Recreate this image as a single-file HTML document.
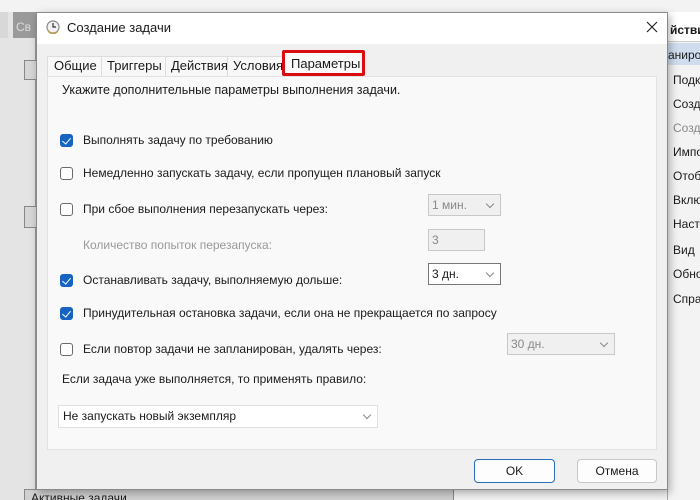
<!DOCTYPE html>
<html><head><meta charset="utf-8"><style>
*{box-sizing:border-box;margin:0;padding:0}
html,body{width:700px;height:500px;overflow:hidden}
body{position:relative;background:#f3f3f3;font-family:"Liberation Sans","DejaVu Sans",sans-serif;font-size:12px;color:#1a1a1a}
#w{position:absolute;left:0;top:0;width:700px;height:500px;overflow:hidden}
.a{position:absolute;white-space:nowrap}
.cb{position:absolute;left:60px;width:13px;height:13px;border:1px solid #6a6a6a;border-radius:3px;background:#fff}
.cb.on{background:#1664c0;border-color:#1664c0}
.cb.on:after{content:"";position:absolute;left:3px;top:1px;width:4px;height:7px;border:solid #fff;border-width:0 1px 1px 0;transform:rotate(40deg)}
.lb{position:absolute;left:83px;white-space:nowrap}
.sel{position:absolute;height:22px;border:1px solid #b8b8b8;background:#fff;padding-left:3px;line-height:20px;white-space:nowrap}
.sel.dis{background:#f0f0f0;color:#888;border-color:#c8c8c8}
.chev{position:absolute;right:7px;top:6px;width:6px;height:6px;border:solid #888;border-width:0 1px 1px 0;transform:rotate(45deg)}
.ri{position:absolute;left:673px;font-size:12px;width:27px;overflow:hidden;white-space:nowrap}
</style></head><body><div id="w">
<!-- left background -->
<div class="a" style="left:0;top:12px;width:36px;height:488px;background:#e4e4e4;border-right:1px solid #999"></div>
<div class="a" style="left:0;top:12px;width:8px;height:26px;background:#d8d8d8"></div>
<div class="a" style="left:13px;top:12px;width:23px;height:26px;background:#9a9a9a;color:#ddd;padding:8px 0 0 3px;overflow:hidden">Св</div>
<div class="a" style="left:24px;top:60px;width:14px;height:20px;background:#d6d6d6;border:1px solid #888"></div>
<div class="a" style="left:24px;top:206px;width:14px;height:22px;background:#d6d6d6;border:1px solid #888"></div>
<div class="a" style="left:24px;top:489px;width:430px;height:11px;background:#d0d0d0;border:1px solid #888;border-bottom:none;padding-left:6px;font-size:12px;line-height:16px;overflow:hidden">Активные задачи</div>
<!-- right background -->
<div class="a" style="left:667px;top:12px;width:33px;height:488px;background:#f3f3f3;border-left:1px solid #aaa"></div>
<div class="a" style="left:668px;top:12px;width:32px;height:30px;background:#fff;border-bottom:1px solid #ccc;font-weight:bold;padding:11px 0 0 2px;font-size:12px;overflow:hidden">йствия</div>
<div class="a" style="left:668px;top:43px;width:32px;height:22px;background:#cfddee;padding:5px 0 0 0;overflow:hidden">анирования</div>
<div class="ri" style="top:73px">Подключиться</div>
<div class="ri" style="top:97px">Создать</div>
<div class="ri" style="top:121px;color:#888">Создать</div>
<div class="ri" style="top:145px">Импорт</div>
<div class="ri" style="top:169px">Отобразить</div>
<div class="ri" style="top:193px">Включить</div>
<div class="ri" style="top:217px">Настройка</div>
<div class="ri" style="top:243px">Вид</div>
<div class="ri" style="top:267px">Обновить</div>
<div class="ri" style="top:292px">Справка</div>
<!-- dialog -->
<div class="a" style="left:36px;top:12px;width:632px;height:478px;background:#f0f0f0;border:1px solid #8a8a8a;box-shadow:2px 3px 8px rgba(0,0,0,.3)"></div>
<div class="a" style="left:37px;top:13px;width:630px;height:31px;background:#fff"></div>
<svg class="a" style="left:46px;top:20px" width="14" height="14" viewBox="0 0 14 14"><circle cx="7" cy="7" r="6" fill="#f2f2f2" stroke="#888" stroke-width="1.2"/><path d="M7 3V7H10" stroke="#333" stroke-width="1.2" fill="none"/><path d="M2 11 A6 6 0 0 0 12 11" stroke="#c8a040" stroke-width="1.2" fill="none"/></svg>
<div class="a" style="left:67px;top:20px;font-size:13px">Создание задачи</div>
<svg class="a" style="left:646px;top:21px" width="12" height="12"><path d="M1 1L11 11M11 1L1 11" stroke="#222" stroke-width="1.2"/></svg>
<!-- tabs -->
<div class="a" style="left:47px;top:56px;width:238px;height:21px;background:#f8f8f8;border:1px solid #ddd;border-bottom:none"></div>
<div class="a" style="left:54px;top:58px;font-size:13px">Общие</div>
<div class="a" style="left:101px;top:57px;width:1px;height:19px;background:#ddd"></div>
<div class="a" style="left:107px;top:58px;font-size:13px">Триггеры</div>
<div class="a" style="left:165px;top:57px;width:1px;height:19px;background:#ddd"></div>
<div class="a" style="left:171px;top:58px;font-size:13px">Действия</div>
<div class="a" style="left:227px;top:57px;width:1px;height:19px;background:#ddd"></div>
<div class="a" style="left:233px;top:58px;font-size:13px">Условия</div>
<div class="a" style="left:47px;top:76px;width:610px;height:374px;background:#f9f9f9;border:1px solid #e2e2e2"></div>
<div class="a" style="left:282px;top:50px;width:83px;height:26px;background:#fafafa;border:3px solid #d90c10;border-radius:2px"></div>
<div class="a" style="left:291px;top:56px;font-size:13px">Параметры</div>
<div class="a" style="left:62px;top:83px;font-size:12.5px">Укажите дополнительные параметры выполнения задачи.</div>
<!-- options -->
<div class="cb on" style="top:134px"></div><div class="lb" style="top:133px">Выполнять задачу по требованию</div>
<div class="cb" style="top:167px"></div><div class="lb" style="top:166px">Немедленно запускать задачу, если пропущен плановый запуск</div>
<div class="cb" style="top:203px"></div><div class="lb" style="top:202px">При сбое выполнения перезапускать через:</div>
<div class="sel dis" style="left:428px;top:194px;width:73px">1 мин.<div class="chev"></div></div>
<div class="lb" style="top:238px;color:#999">Количество попыток перезапуска:</div>
<div class="sel dis" style="left:428px;top:229px;width:57px">3</div>
<div class="cb on" style="top:274px"></div><div class="lb" style="top:273px">Останавливать задачу, выполняемую дольше:</div>
<div class="sel" style="left:428px;top:263px;width:73px;border-color:#777">3 дн.<div class="chev"></div></div>
<div class="cb on" style="top:307px"></div><div class="lb" style="top:306px">Принудительная остановка задачи, если она не прекращается по запросу</div>
<div class="cb" style="top:343px"></div><div class="lb" style="top:342px">Если повтор задачи не запланирован, удалять через:</div>
<div class="sel dis" style="left:507px;top:333px;width:108px">30 дн.<div class="chev"></div></div>
<div class="a" style="left:62px;top:372px">Если задача уже выполняется, то применять правило:</div>
<div class="sel" style="left:58px;top:405px;width:320px;height:23px;border-color:#e0e0e0;padding-left:4px">Не запускать новый экземпляр<div class="chev"></div></div>
<!-- buttons -->
<div class="a" style="left:474px;top:459px;width:81px;height:24px;background:#fdfdfd;border:1px solid #2a6fb8;border-radius:4px;text-align:center;line-height:22px">OK</div>
<div class="a" style="left:577px;top:459px;width:80px;height:24px;background:#fdfdfd;border:1px solid #c8c8c8;border-radius:4px;text-align:center;line-height:22px">Отмена</div>
</div></body></html>
